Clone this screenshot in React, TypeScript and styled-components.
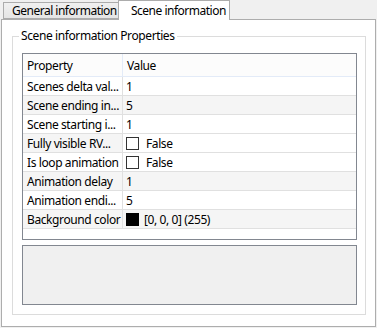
import React from "react";
import styled, { createGlobalStyle } from "styled-components";

const Global = createGlobalStyle`
  html, body { margin: 0; padding: 0; background: #f0f0f0; }
  body { font-family: "Noto Sans", "Open Sans", sans-serif; font-size: 12px; letter-spacing: -0.4px; color: #000; }
  * { box-sizing: border-box; }
`;

const Window = styled.div`
  width: 377px;
  height: 328px;
  padding: 0 1px 1px 1px;
  display: flex;
  flex-direction: column;
`;

const TabStrip = styled.div`
  height: 19px;
  display: flex;
  align-items: flex-end;
  padding-left: 2px;
`;

const Tab = styled.div<{ $active?: boolean }>`
  position: relative;
  z-index: ${(p) => (p.$active ? 2 : 1)};
  height: ${(p) => (p.$active ? "20px" : "17px")};
  margin-bottom: ${(p) => (p.$active ? "-1px" : "0")};
  width: ${(p) => (p.$active ? "112px" : "115px")};
  border: 1px solid #acacac;
  border-bottom: ${(p) => (p.$active ? "none" : "1px solid #acacac")};
  ${(p) => (p.$active ? "" : "border-right: none;")}
  background: ${(p) => (p.$active ? "#ffffff" : "linear-gradient(#f0f0f0, #e5e5e5)")};
  display: flex;
  align-items: center;
  padding-left: ${(p) => (p.$active ? "12px" : "8px")};
  padding-bottom: ${(p) => (p.$active ? "1px" : "0")};
  letter-spacing: -0.5px;
  white-space: nowrap;
`;

const Panel = styled.div`
  flex: 1;
  background: #ffffff;
  border: 1px solid #adadad;
  padding: 16px 9px 11px 10px;
  display: flex;
`;

const GroupBox = styled.div`
  flex: 1;
  border: 1px solid #dcdcdc;
  display: flex;
  flex-direction: column;
  padding: 0 8px 9px 9px;
`;

const GroupTitle = styled.div`
  align-self: flex-start;
  margin: -9px 0 0 -3px;
  padding: 0 2px;
  height: 16px;
  line-height: 16px;
  background: #ffffff;
  white-space: nowrap;
`;

const Grid = styled.div`
  margin-top: 9px;
  height: 187px;
  border: 1px solid #828790;
  background: #ffffff;
  display: flex;
  flex-direction: column;
`;

const HeaderRow = styled.div`
  height: 23px;
  display: grid;
  grid-template-columns: 100px 1fr;
  background: #fcfcfc;
  border-bottom: 1px solid #e3ebf8;
`;

const HeaderCell = styled.div<{ $first?: boolean }>`
  display: flex;
  align-items: center;
  padding-left: 4px;
  ${(p) => (p.$first ? "border-right: 1px solid #e3ebf8;" : "")}
`;

const Row = styled.div<{ $alt?: boolean }>`
  height: 19px;
  display: grid;
  grid-template-columns: 100px 1fr;
  border-bottom: 1px solid #e0e0e0;
  background: ${(p) => (p.$alt ? "#f5f5f5" : "#ffffff")};
`;

const NameCell = styled.div`
  display: flex;
  align-items: center;
  padding-left: 4px;
  border-right: 1px solid #e0e0e0;
  white-space: nowrap;
  overflow: hidden;
`;

const ValueCell = styled.div<{ $white?: boolean }>`
  display: flex;
  align-items: center;
  padding-left: 3px;
  gap: 6px;
  white-space: nowrap;
  ${(p) => (p.$white ? "background: #ffffff;" : "")}
`;

const CheckBox = styled.span`
  width: 13px;
  height: 13px;
  border: 1px solid #333333;
  background: #ffffff;
  margin-right: 1px;
`;

const Swatch = styled.span<{ $color: string }>`
  width: 13px;
  height: 13px;
  background: ${(p) => p.$color};
  margin-right: -1px;
`;

const Description = styled.div`
  margin-top: 5px;
  height: 60px;
  border: 1px solid #828790;
  background: #f0f0f0;
`;

type Item = { name: string; value: string; kind?: "bool" | "color" };

const items: Item[] = [
  { name: "Scenes delta val...", value: "1" },
  { name: "Scene ending in...", value: "5" },
  { name: "Scene starting i...", value: "1" },
  { name: "Fully visible RV...", value: "False", kind: "bool" },
  { name: "Is loop animation", value: "False", kind: "bool" },
  { name: "Animation delay", value: "1" },
  { name: "Animation endi...", value: "5" },
  { name: "Background color", value: "[0, 0, 0] (255)", kind: "color" },
];

export default function App() {
  return (
    <>
      <Global />
      <Window>
        <TabStrip>
          <Tab>General information</Tab>
          <Tab $active>Scene information</Tab>
        </TabStrip>
        <Panel>
          <GroupBox>
            <GroupTitle>Scene information Properties</GroupTitle>
            <Grid>
              <HeaderRow>
                <HeaderCell $first>Property</HeaderCell>
                <HeaderCell>Value</HeaderCell>
              </HeaderRow>
              {items.map((it, i) => (
                <Row key={it.name} $alt={i % 2 === 1}>
                  <NameCell>{it.name}</NameCell>
                  <ValueCell $white={it.kind === "bool"}>
                    {it.kind === "bool" && <CheckBox />}
                    {it.kind === "color" && <Swatch $color="#000000" />}
                    <span>{it.value}</span>
                  </ValueCell>
                </Row>
              ))}
            </Grid>
            <Description />
          </GroupBox>
        </Panel>
      </Window>
    </>
  );
}
